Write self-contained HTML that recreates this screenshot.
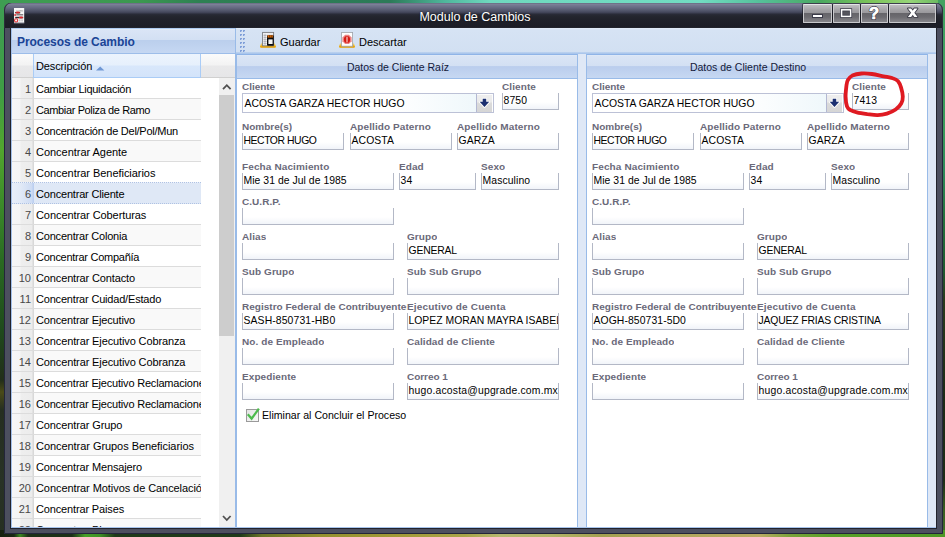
<!DOCTYPE html>
<html><head><meta charset="utf-8"><title>Modulo de Cambios</title>
<style>
html,body{margin:0;padding:0}
body{width:945px;height:537px;overflow:hidden;position:relative;background:#2c6a2c;font-family:"Liberation Sans",sans-serif;font-size:11px;color:#000}
div,span,svg{position:absolute;box-sizing:border-box}
span{white-space:nowrap}
/* wallpaper strips */
#wpT{left:0;top:0;width:945px;height:6px;background:linear-gradient(90deg,#3f9d53 0,#3c9850 140px,#2e8053 200px,#2c7a58 390px,#4fb79c 445px,#6fd8be 490px,#72dcc2 700px,#55c09a 760px,#4aa860 820px,#7cc45a 870px,#96d478 910px,#62b45c 945px)}
#wpL{left:0;top:0;width:8px;height:537px;background:linear-gradient(180deg,#3f9d53 0,#3f9c45 90px,#52a52e 150px,#3d8c2a 200px,#2a6a22 260px,#1f4a1c 330px,#222e1a 380px,#4a4a18 392px,#252e20 410px,#283226 480px,#262f22 537px)}
#wpR{left:938px;top:0;width:7px;height:537px;background:linear-gradient(180deg,#43a262 0,#3a9a5a 130px,#2f8a5a 170px,#25703c 220px,#1f5a30 270px,#2a3a1c 300px,#1c2a16 400px,#1e2c16 480px,#3a5e20 510px,#44702a 537px)}
#wpB{left:0;top:530px;width:945px;height:7px;background:linear-gradient(90deg,#16200f 0,#1a2814 14px,#3c8a22 20px,#1c3018 28px,#1c3018 72px,#46a028 85px,#3f9226 100px,#1e3a1a 115px,#1e3a1a 240px,#6a7428 262px,#94902f 320px,#a29a38 400px,#a8a448 465px,#b6b870 500px,#b2b468 550px,#a2a050 600px,#b0a65c 680px,#b8aa62 760px,#7aa23a 790px,#58a028 830px,#4e9826 945px)}
/* window frame */
#frame{left:4px;top:3px;width:939px;height:531px;border-radius:7px 7px 1px 1px;background:#4c4f5f;box-shadow:inset 0 0 0 1px #23253a}
#tbar{left:4px;top:3px;width:939px;height:25px;border-radius:7px 7px 0 0;background:linear-gradient(180deg,#5d6076 0,#80849b 1px,#767a92 2px,#646880 5px,#4f5368 8px,#3d4053 10px,#2a2c39 11px,#24262f 13px,#1f2029 18px,#1c1d26 25px);box-shadow:inset 1px 0 0 #2b2d39,inset -1px 0 0 #2b2d39}
#title{left:6px;top:4px;width:938px;height:25px;line-height:26px;text-align:center;color:#fff;font-size:12.5px;text-shadow:0 0 2px rgba(0,0,0,.6)}
#title span{position:static}
.wb{top:4px;height:18.5px;border:1px solid #c9c9cc;border-top-color:#e4e4e6;border-radius:1px;background:linear-gradient(180deg,#bfbec1 0,#a3a2a6 30%,#99989c 47%,#66656a 50%,#6c6b70 70%,#87868b 100%);box-shadow:0 0 0 1px rgba(20,20,28,.55)}
#content{left:11px;top:28px;width:925px;height:500px;background:#dfe8f6;overflow:hidden;box-shadow:0 0 0 1px #22232c}
#botline{left:11px;top:527px;width:925px;height:1px;background:#a6c3ec;z-index:5}
/* left panel */
#lph{left:11px;top:28px;width:224px;height:26px;background:linear-gradient(180deg,#e6eefa 0,#dae5f6 1px,#d3e0f3 10.5px,#bbcfed 11.5px,#c5d7f2 23.5px,#9dbde9 24.5px);border-top:1px solid #aecaef}
#lph span{left:6px;top:6px;font-weight:bold;font-size:12px;letter-spacing:-.05px;color:#1a4496;line-height:14px}
#vsep{left:235px;top:28px;width:1px;height:500px;background:#99bbe8}
#ghead{left:11px;top:54px;width:224px;height:24px;background:linear-gradient(180deg,#fbfbfb 0,#f3f3f3 11px,#e9e9ea 12px,#e6e6e8 23px);border-bottom:1px solid #d0d0d0}
#gh1{left:33px;top:54px;width:168px;height:24px;background:linear-gradient(180deg,#ecf3fd 0,#e6f0fc 11px,#d8e7fb 12px,#d4e4fa 22px);border-left:1px solid #aaccf6;border-right:1px solid #aaccf6;border-bottom:1px solid #aaccf6}
#gh1 span{left:2px;top:6px;font-size:11px;letter-spacing:-.12px;line-height:13px;color:#000}
#grid{left:11px;top:0;width:224px;height:528px;overflow:hidden}
#gbody{left:11px;top:78px;width:208px;height:450px;background:#fff}
.row{left:0;width:190px;height:21px;border-bottom:1px solid #dcdcdc;background:#fff}
.row.alt{background:#f9f9f9}
.row.sel{background:#dfe8f6;border-bottom:1px dotted #afc2e3}
.seltop{left:0;width:190px;height:1px;border-top:1px dotted #afc2e3;background:#eef2fa}
.num{left:0;top:0;width:23px;height:20px;overflow:hidden;background:linear-gradient(90deg,#f7f7f7 0,#f5f5f5 9px,#eeeeee 10px,#ececec 21px,#d8d8d8 22px);text-align:right;padding-right:3px;font-size:11px;line-height:22px;color:#484848}
.row.sel .num{background:linear-gradient(90deg,#e9eff9 0,#e2eaf7 9px,#cddbf3 21px,#bccff0 22px)}
.txt{left:25px;top:0;width:165px;height:20px;font-size:11px;line-height:22px;white-space:nowrap;overflow:hidden;color:#000}
/* scrollbar */
#sb{left:219px;top:78px;width:16px;height:450px;background:#f0f0f0}
#sbt{left:219px;top:95px;width:15px;height:241px;background:#cdcdcd}
/* toolbar */
#tool{left:236px;top:28px;width:700px;height:26px;background:linear-gradient(180deg,#e3ecf8 0,#d6e3f4 2px,#d2e0f2 24px,#9fbfea 25px,#b5cdee 26px)}
.tbt{top:35px;font-size:11px;line-height:14px;color:#000}
/* panels */
.panel{top:54px;width:342px;height:474px;background:#fff;border:1px solid #99bbe8;border-top-color:#8fb4e7;border-bottom:none}
.ptitle{left:0;top:0;width:340px;height:24px;background:linear-gradient(180deg,#e2ebf8 0,#dae5f5 1px,#d3e0f3 10.6px,#bacded 11.6px,#c5d7f2 22px);border-bottom:1px solid #99bbe8}
.ptitle span{left:0;top:0;width:322px;display:block;text-align:center;font-size:10.5px;line-height:24px;color:#15193a}
.lbl{font-size:10px;font-weight:bold;color:#6a6979;line-height:12px;white-space:nowrap;overflow:hidden;transform:scaleY(.9);transform-origin:0 9.5px}
.inp{border:1px solid #b3b8c6;border-top:none;background:linear-gradient(180deg,#fff 0,#fff 9px,#f1f4f9 16px);overflow:hidden}
.inp span{left:0.5px;top:2px;font-size:10.4px;line-height:12px;color:#000}
.combo{width:252px;height:20px;border:1px solid #bcc1d6;background:linear-gradient(90deg,#fff 0,#fff 60%,#ecf6fa 100%);overflow:hidden}
.combo span{left:1.5px;top:4px;font-size:10.4px;line-height:12px}
.cbtn{right:0;top:0;width:17px;height:18px;border-left:1px solid #b3b8d2;background:linear-gradient(180deg,#efefef 0,#ebebeb 8px,#dbdbdb 9px,#d6d6d6 18px);box-shadow:inset -1px 1px 0 #fdfdfd}
.cbtn svg{left:0;top:0}
.chk{width:12.5px;height:12.5px;border:1px solid #9a9a9a;background:linear-gradient(135deg,#e4e4e4,#f8f8f8)}
.chkl{font-size:10.6px;line-height:13px;white-space:nowrap;color:#000}

#lline{left:11px;top:28px;width:1px;height:500px;background:#a3c0ea;z-index:4}

</style></head>
<body>
<div id="wpT"></div><div id="wpL"></div><div id="wpR"></div><div id="wpB"></div>
<div id="frame"></div>
<div id="tbar"></div>
<div id="title"><span>Modulo de Cambios</span></div>
<svg style="left:13px;top:7px" width="12" height="17" viewBox="0 0 12 17"><rect x="1" y="1" width="10.2" height="15.2" fill="#f6f6f6"/><rect x="1" y="15.6" width="10.2" height=".8" fill="#55586a"/>
<rect x="3" y="3" width="5.5" height=".7" fill="#c9c9c9"/><rect x="6.5" y="3.6" width="3.6" height=".7" fill="#9a9a9a"/>
<rect x="2.2" y="4.9" width="5" height="1.5" fill="#2a2024"/><ellipse cx="4.8" cy="5.6" rx="2.2" ry="1" fill="#d8262a"/>
<rect x="3.4" y="7.4" width="6.8" height=".9" fill="#3a3438"/><ellipse cx="2.2" cy="7.9" rx="1.2" ry="1" fill="#e0484a"/>
<rect x="2.2" y="9.8" width="8" height="1.5" fill="#2e282c"/><ellipse cx="8" cy="10.5" rx="2.2" ry="1" fill="#d8262a"/>
<circle cx="3.1" cy="13.4" r="1.6" fill="#f4f4f4" stroke="#e03034" stroke-width="1.1"/><rect x="5.8" y="12.4" width="1.8" height="2" fill="#c8c8cc"/><rect x="8.2" y="12.4" width="1.8" height="2" fill="#c8c8cc"/></svg>
<div class="wb" style="left:803px;width:29px"></div>
<div class="wb" style="left:833px;width:27px"></div>
<div class="wb" style="left:861px;width:27px"></div>
<div class="wb" style="left:889px;width:47px"></div>
<svg style="left:803px;top:4px" width="133" height="19" viewBox="0 0 133 19">
<rect x="9.5" y="10.5" width="10" height="3" fill="#fff" stroke="#3a3a48" stroke-width="1"/>
<rect x="38.6" y="5.8" width="9" height="6.6" fill="#55555d" stroke="#3a3a48" stroke-width="3"/>
<rect x="38.6" y="5.8" width="9" height="6.6" fill="none" stroke="#fff" stroke-width="1.5"/>
<text x="71" y="15" font-family="Liberation Sans" font-weight="bold" font-size="16.5" fill="#fff" stroke="#3a3a48" stroke-width="1.8" text-anchor="middle" paint-order="stroke">?</text><text x="71" y="15" font-family="Liberation Sans" font-weight="bold" font-size="16.5" fill="#fff" stroke="#fff" stroke-width=".5" text-anchor="middle">?</text>
<path d="M104.9 4.4h3.2l6.4 8.6h-3.2z M114.5 4.4h-3.2l-6.4 8.6h3.2z" fill="#3a3a46" stroke="#3a3a46" stroke-width="1.7" stroke-linejoin="round"/><path d="M104.9 4.4h3.2l6.4 8.6h-3.2z" fill="#fff"/><path d="M114.5 4.4h-3.2l-6.4 8.6h3.2z" fill="#fff"/>
</svg>
<div id="content"></div><div id="botline"></div>
<div id="lph"><span>Procesos de Cambio</span></div>
<div id="gbody"></div>
<div id="ghead"></div>
<div id="gh1"><span>Descripción</span><svg style="left:62px;top:12px" width="9" height="5" viewBox="0 0 9 5"><path d="M0 4.6 L4.2 0.4 L8.4 4.6z" fill="#6f97d4"/></svg></div>
<div id="sb"></div><div id="sbt"></div>
<svg style="left:219px;top:78px" width="16" height="17" viewBox="0 0 16 17"><path d="M4 11.2 L7.8 7.2 L11.6 11.2" fill="none" stroke="#505050" stroke-width="1.8"/></svg>
<svg style="left:219px;top:510px" width="16" height="17" viewBox="0 0 16 17"><path d="M4 6 L7.8 10 L11.6 6" fill="none" stroke="#505050" stroke-width="1.8"/></svg>
<div id="vsep"></div><div id="lline"></div>
<div id="tool"></div>
<svg style="left:239px;top:28px" width="8" height="24" viewBox="0 0 8 24"><rect x="1" y="2" width="2" height="2" fill="#b6c9ea"/><rect x="1" y="2" width="2" height="1" fill="#7f9fd8"/><rect x="1" y="2" width="1" height="2" fill="#7f9fd8"/><rect x="4" y="2" width="2" height="2" fill="#b6c9ea"/><rect x="4" y="2" width="2" height="1" fill="#7f9fd8"/><rect x="4" y="2" width="1" height="2" fill="#7f9fd8"/><rect x="1" y="6" width="2" height="2" fill="#b6c9ea"/><rect x="1" y="6" width="2" height="1" fill="#7f9fd8"/><rect x="1" y="6" width="1" height="2" fill="#7f9fd8"/><rect x="4" y="6" width="2" height="2" fill="#b6c9ea"/><rect x="4" y="6" width="2" height="1" fill="#7f9fd8"/><rect x="4" y="6" width="1" height="2" fill="#7f9fd8"/><rect x="1" y="10" width="2" height="2" fill="#b6c9ea"/><rect x="1" y="10" width="2" height="1" fill="#7f9fd8"/><rect x="1" y="10" width="1" height="2" fill="#7f9fd8"/><rect x="4" y="10" width="2" height="2" fill="#b6c9ea"/><rect x="4" y="10" width="2" height="1" fill="#7f9fd8"/><rect x="4" y="10" width="1" height="2" fill="#7f9fd8"/><rect x="1" y="14" width="2" height="2" fill="#b6c9ea"/><rect x="1" y="14" width="2" height="1" fill="#7f9fd8"/><rect x="1" y="14" width="1" height="2" fill="#7f9fd8"/><rect x="4" y="14" width="2" height="2" fill="#b6c9ea"/><rect x="4" y="14" width="2" height="1" fill="#7f9fd8"/><rect x="4" y="14" width="1" height="2" fill="#7f9fd8"/><rect x="1" y="18" width="2" height="2" fill="#b6c9ea"/><rect x="1" y="18" width="2" height="1" fill="#7f9fd8"/><rect x="1" y="18" width="1" height="2" fill="#7f9fd8"/><rect x="4" y="18" width="2" height="2" fill="#b6c9ea"/><rect x="4" y="18" width="2" height="1" fill="#7f9fd8"/><rect x="4" y="18" width="1" height="2" fill="#7f9fd8"/><rect x="1" y="22" width="2" height="2" fill="#b6c9ea"/><rect x="1" y="22" width="2" height="1" fill="#7f9fd8"/><rect x="1" y="22" width="1" height="2" fill="#7f9fd8"/><rect x="4" y="22" width="2" height="2" fill="#b6c9ea"/><rect x="4" y="22" width="2" height="1" fill="#7f9fd8"/><rect x="4" y="22" width="1" height="2" fill="#7f9fd8"/></svg>
<svg style="left:259px;top:31px" width="18" height="18" viewBox="0 0 18 18"><defs><linearGradient id="gold" x1="0" y1="0" x2="0" y2="1"><stop offset="0" stop-color="#f6c84a" stop-opacity="0"/><stop offset=".5" stop-color="#f2b820" stop-opacity=".8"/><stop offset=".8" stop-color="#eaa400"/><stop offset="1" stop-color="#e29a00"/></linearGradient></defs>
<path d="M2.6 11 L15.4 11 L17 15.6 Q17 16.8 15.8 16.8 L2.2 16.8 Q1 16.8 1 15.6z" fill="url(#gold)"/>
<rect x="3.6" y="1.4" width="11" height="13.4" fill="#fdfdfd" stroke="#77797f" stroke-width=".9"/>
<rect x="4.6" y="2.6" width="2.6" height="11.4" fill="#d4d6dc"/><path d="M4.6 4.5h3M4.6 6.5h3M4.6 8.5h3M4.6 10.5h3M4.6 12.5h3" stroke="#9da0a8" stroke-width=".6"/><rect x="7.4" y="2.4" width="6.6" height="1.6" fill="#e6e7ea"/>
<rect x="8" y="4.2" width="6.8" height="10.6" rx=".8" fill="#0c0c0e"/>
<rect x="8.6" y="4.2" width="5.2" height="2.4" fill="#de6c08"/><rect x="10" y="4.2" width=".5" height="2.4" fill="#30180a"/><rect x="11.9" y="4.2" width=".5" height="2.4" fill="#30180a"/>
<rect x="9.4" y="8.4" width="4.2" height="4.6" fill="#f4f4f4"/>
</svg>
<span class="tbt" style="left:280px">Guardar</span>
<svg style="left:338px;top:31px" width="18" height="18" viewBox="0 0 18 18">
<path d="M2.6 11 L15.4 11 L17 15.6 Q17 16.8 15.8 16.8 L2.2 16.8 Q1 16.8 1 15.6z" fill="url(#gold)"/>
<rect x="3.6" y="1.4" width="11" height="13.8" fill="#fefefe" stroke="#9ea2a8" stroke-width=".8"/>
<path d="M7.1 3.8h3.8l2.7 2.7v3.8l-2.7 2.7H7.1L4.4 10.3V6.5z" fill="#ec8484"/>
<ellipse cx="9" cy="8.4" rx="3.1" ry="3.5" fill="#d61a12"/>
<rect x="8.5" y="5.4" width="1" height="6" rx=".5" fill="#fff" opacity=".92"/>
</svg>
<span class="tbt" style="left:359px">Descartar</span>
<div id="grid">
<div class="row" style="top:78px"><div class="num">1</div><div class="txt" style="letter-spacing:-0.278px">Cambiar Liquidación</div></div>
<div class="row alt" style="top:99px"><div class="num">2</div><div class="txt" style="letter-spacing:-0.372px">Cambiar Poliza de Ramo</div></div>
<div class="row" style="top:120px"><div class="num">3</div><div class="txt" style="letter-spacing:-0.261px">Concentración de Del/Pol/Mun</div></div>
<div class="row alt" style="top:141px"><div class="num">4</div><div class="txt" style="letter-spacing:-0.031px">Concentrar Agente</div></div>
<div class="row" style="top:162px"><div class="num">5</div><div class="txt" style="letter-spacing:-0.044px">Concentrar Beneficiarios</div></div>
<div class="row alt sel" style="top:183px"><div class="num">6</div><div class="txt" style="letter-spacing:-0.184px">Concentrar Cliente</div></div>
<div class="row" style="top:204px"><div class="num">7</div><div class="txt" style="letter-spacing:-0.076px">Concentrar Coberturas</div></div>
<div class="row alt" style="top:225px"><div class="num">8</div><div class="txt" style="letter-spacing:-0.199px">Concentrar Colonia</div></div>
<div class="row" style="top:246px"><div class="num">9</div><div class="txt" style="letter-spacing:-0.265px">Concentrar Compañía</div></div>
<div class="row alt" style="top:267px"><div class="num">10</div><div class="txt" style="letter-spacing:-0.132px">Concentrar Contacto</div></div>
<div class="row" style="top:288px"><div class="num">11</div><div class="txt" style="letter-spacing:-0.189px">Concentrar Cuidad/Estado</div></div>
<div class="row alt" style="top:309px"><div class="num">12</div><div class="txt" style="letter-spacing:-0.155px">Concentrar Ejecutivo</div></div>
<div class="row" style="top:330px"><div class="num">13</div><div class="txt" style="letter-spacing:-0.123px">Concentrar Ejecutivo Cobranza</div></div>
<div class="row alt" style="top:351px"><div class="num">14</div><div class="txt" style="letter-spacing:-0.123px">Concentrar Ejecutivo Cobranza</div></div>
<div class="row" style="top:372px"><div class="num">15</div><div class="txt" style="letter-spacing:-0.190px">Concentrar Ejecutivo Reclamaciones</div></div>
<div class="row alt" style="top:393px"><div class="num">16</div><div class="txt" style="letter-spacing:-0.190px">Concentrar Ejecutivo Reclamaciones</div></div>
<div class="row" style="top:414px"><div class="num">17</div><div class="txt" style="letter-spacing:-0.109px">Concentrar Grupo</div></div>
<div class="row alt" style="top:435px"><div class="num">18</div><div class="txt" style="letter-spacing:-0.054px">Concentrar Grupos Beneficiarios</div></div>
<div class="row" style="top:456px"><div class="num">19</div><div class="txt" style="letter-spacing:-0.137px">Concentrar Mensajero</div></div>
<div class="row alt" style="top:477px"><div class="num">20</div><div class="txt" style="letter-spacing:-0.070px">Concentrar Motivos de Cancelación</div></div>
<div class="row" style="top:498px"><div class="num">21</div><div class="txt" style="letter-spacing:-0.147px">Concentrar Paises</div></div>
<div class="row alt" style="top:519px"><div class="num">22</div><div class="txt" style="letter-spacing:-0.130px">Concentrar Plazas</div></div>
<div class="seltop" style="top:182px"></div>
</div>
<div class="panel" style="left:236px">
<div class="ptitle"><span>Datos de Cliente Raíz</span></div>
<div class="lbl" style="left:5px;top:25.5px;letter-spacing:-.03px">Cliente</div>
<div class="combo" style="left:5px;top:38px"><span style="letter-spacing:-0.005px">ACOSTA GARZA HECTOR HUGO</span><div class="cbtn"><svg width="17" height="18" viewBox="0 0 17 18"><path d="M5.7 4.7h3.5v3.1h3L7.45 13.1 2.7 7.8h3z" fill="#fff" stroke="#fff" stroke-width="1.8" stroke-linejoin="round" opacity=".9"/><path d="M5.7 4.7h3.5v3.1h3L7.45 13.1 2.7 7.8h3z" fill="#1b2f70"/></svg></div></div>
<div class="lbl" style="left:265px;top:25.5px;letter-spacing:0.090px">Cliente</div><div class="inp" style="left:265px;top:38px;width:57px;height:17px"><span style="letter-spacing:0.100px">8750</span></div>
<div class="lbl" style="left:5px;top:65.5px;letter-spacing:0.009px">Nombre(s)</div><div class="inp" style="left:5px;top:78px;width:102px;height:17px"><span style="letter-spacing:-0.432px">HECTOR HUGO</span></div>
<div class="lbl" style="left:113px;top:65.5px;letter-spacing:0.090px">Apellido Paterno</div><div class="inp" style="left:113px;top:78px;width:102px;height:17px"><span style="letter-spacing:0.100px">ACOSTA</span></div>
<div class="lbl" style="left:220px;top:65.5px;letter-spacing:0.117px">Apellido Materno</div><div class="inp" style="left:220px;top:78px;width:102px;height:17px"><span style="letter-spacing:0.100px">GARZA</span></div>
<div class="lbl" style="left:5px;top:105.5px;letter-spacing:0.119px">Fecha Nacimiento</div><div class="inp" style="left:5px;top:118px;width:152px;height:17px"><span style="letter-spacing:0.045px">Mie 31 de Jul de 1985</span></div>
<div class="lbl" style="left:162px;top:105.5px;letter-spacing:0.090px">Edad</div><div class="inp" style="left:162px;top:118px;width:77px;height:17px"><span style="letter-spacing:0.100px">34</span></div>
<div class="lbl" style="left:244px;top:105.5px;letter-spacing:0.090px">Sexo</div><div class="inp" style="left:244px;top:118px;width:78px;height:17px"><span style="letter-spacing:0.100px">Masculino</span></div>
<div class="lbl" style="left:5px;top:140.5px;letter-spacing:0.041px">C.U.R.P.</div><div class="inp" style="left:5px;top:153px;width:152px;height:17px"><span style="letter-spacing:0.100px"></span></div>
<div class="lbl" style="left:5px;top:175.5px;letter-spacing:0.090px">Alias</div><div class="inp" style="left:5px;top:188px;width:152px;height:17px"><span style="letter-spacing:0.100px"></span></div>
<div class="lbl" style="left:170px;top:175.5px;letter-spacing:0.090px">Grupo</div><div class="inp" style="left:170px;top:188px;width:152px;height:17px"><span style="letter-spacing:-0.182px">GENERAL</span></div>
<div class="lbl" style="left:5px;top:210.5px;letter-spacing:0.090px">Sub Grupo</div><div class="inp" style="left:5px;top:223px;width:152px;height:17px"><span style="letter-spacing:0.100px"></span></div>
<div class="lbl" style="left:170px;top:210.5px;letter-spacing:0.090px">Sub Sub Grupo</div><div class="inp" style="left:170px;top:223px;width:152px;height:17px"><span style="letter-spacing:0.100px"></span></div>
<div class="lbl" style="left:5px;top:245.5px;letter-spacing:0.015px;width:165px">Registro Federal de Contribuyentes</div><div class="inp" style="left:5px;top:258px;width:152px;height:17px"><span style="letter-spacing:0.113px">SASH-850731-HB0</span></div>
<div class="lbl" style="left:170px;top:245.5px;letter-spacing:0.159px">Ejecutivo de Cuenta</div><div class="inp" style="left:170px;top:258px;width:152px;height:17px"><span style="letter-spacing:0.004px">LOPEZ MORAN MAYRA ISABEL</span></div>
<div class="lbl" style="left:5px;top:280.5px;letter-spacing:0.090px">No. de Empleado</div><div class="inp" style="left:5px;top:293px;width:152px;height:17px"><span style="letter-spacing:0.100px"></span></div>
<div class="lbl" style="left:170px;top:280.5px;letter-spacing:0.073px">Calidad de Cliente</div><div class="inp" style="left:170px;top:293px;width:152px;height:17px"><span style="letter-spacing:0.100px"></span></div>
<div class="lbl" style="left:5px;top:315.5px;letter-spacing:0.090px">Expediente</div><div class="inp" style="left:5px;top:328px;width:152px;height:17px"><span style="letter-spacing:0.100px"></span></div>
<div class="lbl" style="left:170px;top:315.5px;letter-spacing:-0.053px">Correo 1</div><div class="inp" style="left:170px;top:328px;width:152px;height:17px"><span style="letter-spacing:0.190px">hugo.acosta@upgrade.com.mx</span></div>
<div class="chk" style="left:9px;top:354px"></div><svg class="chkm" style="left:8px;top:350px" width="18" height="18" viewBox="0 0 18 18"><path d="M3.6 10.2 L6.6 13.6 L13.2 4.6" fill="none" stroke="#4dbb4d" stroke-width="2.3" stroke-linecap="square"/></svg><div class="chkl" style="left:25px;top:353.6px">Eliminar al Concluir el Proceso</div>
</div><div class="panel" style="left:586px">
<div class="ptitle"><span>Datos de Cliente Destino</span></div>
<div class="lbl" style="left:5px;top:25.5px;letter-spacing:-.03px">Cliente</div>
<div class="combo" style="left:5px;top:38px"><span style="letter-spacing:-0.005px">ACOSTA GARZA HECTOR HUGO</span><div class="cbtn"><svg width="17" height="18" viewBox="0 0 17 18"><path d="M5.7 4.7h3.5v3.1h3L7.45 13.1 2.7 7.8h3z" fill="#fff" stroke="#fff" stroke-width="1.8" stroke-linejoin="round" opacity=".9"/><path d="M5.7 4.7h3.5v3.1h3L7.45 13.1 2.7 7.8h3z" fill="#1b2f70"/></svg></div></div>
<div class="lbl" style="left:265px;top:25.5px;letter-spacing:0.090px">Cliente</div><div class="inp" style="left:265px;top:38px;width:57px;height:17px"><span style="letter-spacing:0.100px">7413</span></div>
<div class="lbl" style="left:5px;top:65.5px;letter-spacing:0.009px">Nombre(s)</div><div class="inp" style="left:5px;top:78px;width:102px;height:17px"><span style="letter-spacing:-0.432px">HECTOR HUGO</span></div>
<div class="lbl" style="left:113px;top:65.5px;letter-spacing:0.090px">Apellido Paterno</div><div class="inp" style="left:113px;top:78px;width:102px;height:17px"><span style="letter-spacing:0.100px">ACOSTA</span></div>
<div class="lbl" style="left:220px;top:65.5px;letter-spacing:0.117px">Apellido Materno</div><div class="inp" style="left:220px;top:78px;width:102px;height:17px"><span style="letter-spacing:0.100px">GARZA</span></div>
<div class="lbl" style="left:5px;top:105.5px;letter-spacing:0.119px">Fecha Nacimiento</div><div class="inp" style="left:5px;top:118px;width:152px;height:17px"><span style="letter-spacing:0.045px">Mie 31 de Jul de 1985</span></div>
<div class="lbl" style="left:162px;top:105.5px;letter-spacing:0.090px">Edad</div><div class="inp" style="left:162px;top:118px;width:77px;height:17px"><span style="letter-spacing:0.100px">34</span></div>
<div class="lbl" style="left:244px;top:105.5px;letter-spacing:0.090px">Sexo</div><div class="inp" style="left:244px;top:118px;width:78px;height:17px"><span style="letter-spacing:0.100px">Masculino</span></div>
<div class="lbl" style="left:5px;top:140.5px;letter-spacing:0.041px">C.U.R.P.</div><div class="inp" style="left:5px;top:153px;width:152px;height:17px"><span style="letter-spacing:0.100px"></span></div>
<div class="lbl" style="left:5px;top:175.5px;letter-spacing:0.090px">Alias</div><div class="inp" style="left:5px;top:188px;width:152px;height:17px"><span style="letter-spacing:0.100px"></span></div>
<div class="lbl" style="left:170px;top:175.5px;letter-spacing:0.090px">Grupo</div><div class="inp" style="left:170px;top:188px;width:152px;height:17px"><span style="letter-spacing:-0.182px">GENERAL</span></div>
<div class="lbl" style="left:5px;top:210.5px;letter-spacing:0.090px">Sub Grupo</div><div class="inp" style="left:5px;top:223px;width:152px;height:17px"><span style="letter-spacing:0.100px"></span></div>
<div class="lbl" style="left:170px;top:210.5px;letter-spacing:0.090px">Sub Sub Grupo</div><div class="inp" style="left:170px;top:223px;width:152px;height:17px"><span style="letter-spacing:0.100px"></span></div>
<div class="lbl" style="left:5px;top:245.5px;letter-spacing:0.015px;width:165px">Registro Federal de Contribuyentes</div><div class="inp" style="left:5px;top:258px;width:152px;height:17px"><span style="letter-spacing:0.082px">AOGH-850731-5D0</span></div>
<div class="lbl" style="left:170px;top:245.5px;letter-spacing:0.159px">Ejecutivo de Cuenta</div><div class="inp" style="left:170px;top:258px;width:152px;height:17px"><span style="letter-spacing:-0.165px">JAQUEZ FRIAS CRISTINA</span></div>
<div class="lbl" style="left:5px;top:280.5px;letter-spacing:0.090px">No. de Empleado</div><div class="inp" style="left:5px;top:293px;width:152px;height:17px"><span style="letter-spacing:0.100px"></span></div>
<div class="lbl" style="left:170px;top:280.5px;letter-spacing:0.073px">Calidad de Cliente</div><div class="inp" style="left:170px;top:293px;width:152px;height:17px"><span style="letter-spacing:0.100px"></span></div>
<div class="lbl" style="left:5px;top:315.5px;letter-spacing:0.090px">Expediente</div><div class="inp" style="left:5px;top:328px;width:152px;height:17px"><span style="letter-spacing:0.100px"></span></div>
<div class="lbl" style="left:170px;top:315.5px;letter-spacing:-0.053px">Correo 1</div><div class="inp" style="left:170px;top:328px;width:152px;height:17px"><span style="letter-spacing:0.190px">hugo.acosta@upgrade.com.mx</span></div>
</div><svg style="left:835px;top:62px" width="90" height="62" viewBox="835 62 90 62"><path d="M846.5 85.1 C846.9 82.3 847.0 81.5 847.9 79.9 C848.9 78.3 850.0 76.7 852.3 75.6 C854.6 74.6 858.3 73.8 861.5 73.5 C864.8 73.3 868.3 73.5 871.9 74.0 C875.6 74.5 880.0 75.6 883.5 76.3 C886.9 77.0 890.3 77.4 892.7 78.2 C895.1 78.9 896.5 79.5 897.9 81.0 C899.3 82.6 900.2 84.8 901.0 87.4 C901.8 90.0 902.8 93.9 902.8 96.6 C902.9 99.3 902.4 101.4 901.2 103.5 C900.0 105.7 898.0 107.9 895.6 109.5 C893.2 111.2 889.9 112.7 886.9 113.6 C883.9 114.5 881.0 115.0 877.7 115.1 C874.4 115.2 870.8 114.6 867.3 114.2 C863.8 113.7 859.7 113.1 856.9 112.4 C854.1 111.8 852.2 111.2 850.6 110.2 C848.9 109.2 847.8 108.7 847.0 106.4 C846.2 104.2 845.7 100.2 845.6 96.6 C845.5 93.1 846.2 87.9 846.5 85.1z" fill="none" stroke="#df1a22" stroke-width="3.8" stroke-linejoin="round"/></svg>

</div>
</body></html>
